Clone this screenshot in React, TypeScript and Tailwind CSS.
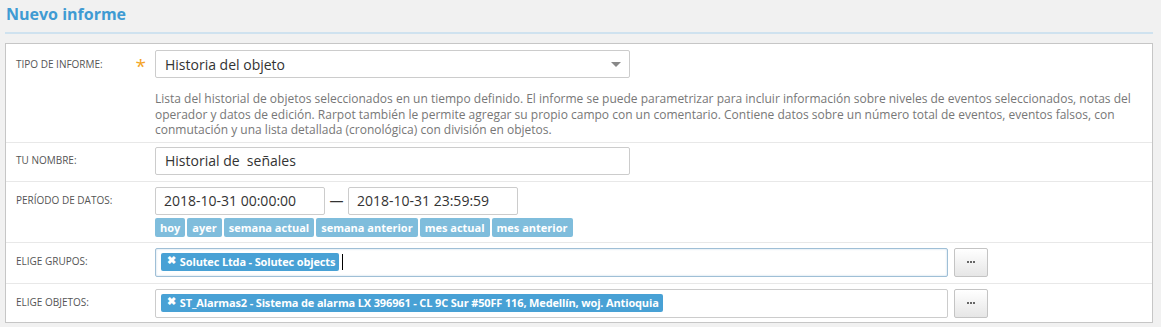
import { useState } from 'react';

const quickRanges = ['hoy', 'ayer', 'semana actual', 'semana anterior', 'mes actual', 'mes anterior'];

function Label({ text, required }: { text: string; required?: boolean }) {
  return (
    <div className="w-[149px] shrink-0 pl-[10px] pr-[9px] h-[28px] flex items-center">
      <span className="text-[10px] uppercase text-[#555]">{text}</span>
      {required && <span className="ml-auto text-[19px] leading-none text-[#f4a425] mt-[5px]">*</span>}
    </div>
  );
}

function Token({ text }: { text: string }) {
  return (
    <span className="inline-flex items-start h-[18px] bg-[#48a1d5] rounded-[2px] pl-[6px] pr-[4px] text-white text-[11px] font-bold leading-[18px] tracking-[-0.15px]">
      <span className="text-[11px] leading-[13px] mr-[4px]">✖</span>
      {text}
    </span>
  );
}

function DotsButton() {
  return (
    <button className="w-[34px] h-[29px] border border-[#c4c4c4] rounded-[2px] bg-gradient-to-b from-white to-[#e6e6e6] flex items-center justify-center gap-[1px]">
      <span className="w-[2px] h-[2px] bg-[#666]" />
      <span className="w-[2px] h-[2px] bg-[#666]" />
      <span className="w-[2px] h-[2px] bg-[#666]" />
    </button>
  );
}

export default function App() {
  const [name, setName] = useState('Historial de  señales');

  return (
    <div className="min-h-[327px] bg-[#f1f1f1] px-[5px] pt-[2px] font-['Open_Sans',sans-serif]">
      {/* Title */}
      <h1 className="text-[16px] font-bold text-[#3f9bd3] pl-[1px] h-[30px] leading-[25px]">Nuevo informe</h1>
      <div className="h-[2px] bg-[#cfe2ef] mr-[3px]" />

      {/* Form panel */}
      <div className="mt-[9px] mr-[3px] bg-white border border-[#c6c6c6]">
        {/* Tipo de informe */}
        <div className="flex border-b border-[#e8e8e8] pt-[6px] pb-[4px]">
          <Label text="Tipo de informe:" required />
          <div className="flex-1">
            <div className="w-[475px] h-[28px] border border-[#ccc] rounded-[2px] flex items-center pl-[9px] pr-[8px]">
              <span className="text-[14px] text-[#333]">Historia del objeto</span>
              <span className="ml-auto w-0 h-0 border-l-[5px] border-r-[5px] border-t-[5px] border-l-transparent border-r-transparent border-t-[#888]" />
            </div>
            <p className="mt-[13px] text-[12px] leading-[15.5px] text-[#777]">
              Lista del historial de objetos seleccionados en un tiempo definido. El informe se puede parametrizar para incluir información sobre niveles de eventos seleccionados, notas del<br />
              operador y datos de edición. Rarpot también le permite agregar su propio campo con un comentario. Contiene datos sobre un número total de eventos, eventos falsos, con<br />
              conmutación y una lista detallada (cronológica) con división en objetos.
            </p>
          </div>
        </div>

        {/* Tu nombre */}
        <div className="flex border-b border-[#e8e8e8] pt-[4px] pb-[6px]">
          <Label text="Tu nombre:" />
          <input
            value={name}
            onChange={(e) => setName(e.target.value)}
            className="w-[475px] h-[28px] border border-[#ccc] rounded-[2px] pl-[9px] text-[14px] text-[#333] outline-none"
          />
        </div>

        {/* Periodo de datos */}
        <div className="flex border-b border-[#e8e8e8] pt-[5px] pb-[5px]">
          <Label text="Período de datos:" />
          <div>
            <div className="flex items-center">
              <div className="w-[170px] h-[28px] border border-[#ccc] rounded-[2px] pl-[8px] flex items-center text-[14px] text-[#333]">2018-10-31 00:00:00</div>
              <span className="w-[23px] text-center text-[14px] text-[#333]">—</span>
              <div className="w-[170px] h-[28px] border border-[#ccc] rounded-[2px] pl-[8px] flex items-center text-[14px] text-[#333]">2018-10-31 23:59:59</div>
            </div>
            <div className="flex gap-[2px] mt-[3px]">
              {quickRanges.map((r) => (
                <span key={r} className="h-[19px] px-[5px] rounded-[2px] bg-[#7fbddc] text-white text-[11px] font-bold leading-[19px]">
                  {r}
                </span>
              ))}
            </div>
          </div>
        </div>

        {/* Elige grupos */}
        <div className="flex border-b border-[#e8e8e8] pt-[5px] pb-[6px]">
          <Label text="Elige grupos:" />
          <div className="flex gap-[6px]">
            <div className="w-[793px] h-[29px] border border-[#9fbfd6] rounded-[2px] shadow-[inset_0_0_2px_rgba(120,170,210,0.5)] flex items-center pl-[5px]">
              <Token text="Solutec Ltda - Solutec objects" />
              <span className="ml-[3px] w-[1px] h-[16px] bg-black" />
            </div>
            <DotsButton />
          </div>
        </div>

        {/* Elige objetos */}
        <div className="flex pt-[5px] pb-[4px]">
          <Label text="Elige objetos:" />
          <div className="flex gap-[6px]">
            <div className="w-[793px] h-[29px] border border-[#ccc] rounded-[2px] flex items-center pl-[5px]">
              <Token text="ST_Alarmas2 - Sistema de alarma LX 396961 - CL 9C Sur #50FF 116, Medellín, woj. Antioquia" />
            </div>
            <DotsButton />
          </div>
        </div>
      </div>
    </div>
  );
}
